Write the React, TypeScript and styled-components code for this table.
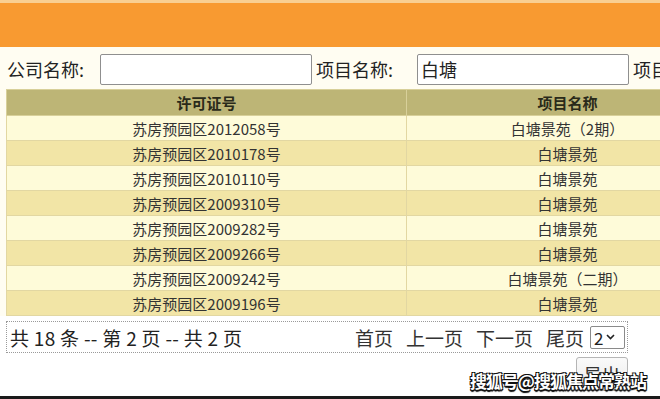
import styled, { createGlobalStyle } from 'styled-components'

const GlobalStyle = createGlobalStyle`
  html, body {
    margin: 0;
    padding: 0;
    background: #ffffff;
    overflow: hidden;
  }
  body {
    font-family: "Noto Sans CJK SC", "Noto Sans", sans-serif;
    color: #333333;
  }
`

const rows = [
  { code: '苏房预园区2012058号', name: '白塘景苑（2期）' },
  { code: '苏房预园区2010178号', name: '白塘景苑' },
  { code: '苏房预园区2010110号', name: '白塘景苑' },
  { code: '苏房预园区2009310号', name: '白塘景苑' },
  { code: '苏房预园区2009282号', name: '白塘景苑' },
  { code: '苏房预园区2009266号', name: '白塘景苑' },
  { code: '苏房预园区2009242号', name: '白塘景苑（二期）' },
  { code: '苏房预园区2009196号', name: '白塘景苑' },
]

const Page = styled.div`
  position: relative;
  width: 660px;
  height: 399px;
  display: flex;
  flex-direction: column;
  overflow: hidden;
`

const TopSection = styled.div`
  background: #fffdf2;
  display: flex;
  flex-direction: column;
`

const Banner = styled.div`
  height: 44px;
  background: #f89a31;
  border-top: 3px solid #f9cf92;
`

const SearchRow = styled.div`
  display: flex;
  align-items: center;
  height: 38px;
  padding: 3px 0 1px 7px;
  white-space: nowrap;
`

const Label = styled.span<{ $gap: number }>`
  font-size: 18px;
  line-height: 24px;
  color: #222;
  margin-right: ${(p) => p.$gap}px;
`

const Input = styled.div`
  box-sizing: border-box;
  flex-shrink: 0;
  width: 212px;
  height: 31px;
  border: 1px solid #8f8f8f;
  border-radius: 2px;
  background: #ffffff;
  font-size: 18px;
  line-height: 28px;
  padding-left: 3px;
  margin-right: 4px;
  color: #222;
`

const TableWrap = styled.div`
  padding-left: 6px;
  background: #fffdf2;
`

const Table = styled.table`
  width: 722px;
  border-collapse: collapse;
  table-layout: fixed;
  font-size: 15px;
`

const HeadCell = styled.th`
  height: 25px;
  padding: 0;
  background: #bdb576;
  color: #2a2a1a;
  font-weight: bold;
  text-align: center;
  border: 1px solid #d8d09a;
`

const Cell = styled.td<{ $alt: boolean }>`
  height: 24px;
  padding: 0;
  text-align: center;
  color: #333;
  background: ${(p) => (p.$alt ? '#f2e5a6' : '#fefbd9')};
  border: 1px solid #e2d7a2;
`

const Pager = styled.div`
  box-sizing: border-box;
  margin: 5px 0 0 6px;
  width: 622px;
  height: 32px;
  border: 1px dotted #9a9a9a;
  display: flex;
  align-items: center;
  justify-content: space-between;
  padding: 0 2px 0 3px;
  font-size: 19px;
  color: #222;
`

const PagerInfo = styled.span`
  letter-spacing: 0.3px;
`

const PagerLinks = styled.div`
  display: flex;
  align-items: center;
  gap: 13px;
`

const PagerLink = styled.span`
  color: #333;
`

const PageSelect = styled.div`
  box-sizing: border-box;
  width: 35px;
  height: 23px;
  border: 1px solid #8a8a8a;
  border-radius: 2px;
  display: flex;
  align-items: center;
  padding-left: 3px;
  gap: 3px;
  font-size: 17px;
  margin-left: -7px;
  background: #fff;
`

const ActionRow = styled.div`
  display: flex;
  justify-content: flex-end;
  width: 628px;
  padding-top: 4px;
`

const ExportButton = styled.div`
  box-sizing: border-box;
  width: 52px;
  height: 34px;
  border: 1px solid #b5b5b5;
  border-radius: 3px;
  background: linear-gradient(#fafafa, #e9e9e9);
  font-size: 18px;
  text-align: center;
  line-height: 32px;
  color: #333;
`

const BottomLine = styled.div`
  margin-top: auto;
  height: 3px;
  background: #1a1a1a;
`

const Watermark = styled.div`
  position: absolute;
  right: 14px;
  bottom: 6px;
  font-size: 17px;
  font-weight: bold;
  color: #ffffff;
  letter-spacing: -1px;
  text-shadow: -1px -1px 0 #111, 1px -1px 0 #111, -1px 1px 0 #111, 1px 1px 0 #111, 0 2px 1px #000;
`

export default function App() {
  return (
    <Page>
      <GlobalStyle />
      <TopSection>
        <Banner />
        <SearchRow>
          <Label $gap={16}>公司名称:</Label>
          <Input />
          <Label $gap={24}>项目名称:</Label>
          <Input>白塘</Input>
          <Label $gap={0}>项目名称:</Label>
        </SearchRow>
      </TopSection>
      <TableWrap>
        <Table>
          <colgroup>
            <col style={{ width: 400 }} />
            <col style={{ width: 322 }} />
          </colgroup>
          <thead>
            <tr>
              <HeadCell>许可证号</HeadCell>
              <HeadCell>项目名称</HeadCell>
            </tr>
          </thead>
          <tbody>
            {rows.map((r, i) => (
              <tr key={r.code}>
                <Cell $alt={i % 2 === 1}>{r.code}</Cell>
                <Cell $alt={i % 2 === 1}>{r.name}</Cell>
              </tr>
            ))}
          </tbody>
        </Table>
      </TableWrap>
      <Pager>
        <PagerInfo>共 18 条 -- 第 2 页 -- 共 2 页</PagerInfo>
        <PagerLinks>
          <PagerLink>首页</PagerLink>
          <PagerLink>上一页</PagerLink>
          <PagerLink>下一页</PagerLink>
          <PagerLink>尾页</PagerLink>
          <PageSelect>
            2
            <svg width="9" height="6" viewBox="0 0 9 6">
              <path d="M1 1l3.5 3.5L8 1" fill="none" stroke="#222" strokeWidth="1.6" />
            </svg>
          </PageSelect>
        </PagerLinks>
      </Pager>
      <ActionRow>
        <ExportButton>导出</ExportButton>
      </ActionRow>
      <BottomLine />
      <Watermark>搜狐号@搜狐焦点常熟站</Watermark>
    </Page>
  )
}
